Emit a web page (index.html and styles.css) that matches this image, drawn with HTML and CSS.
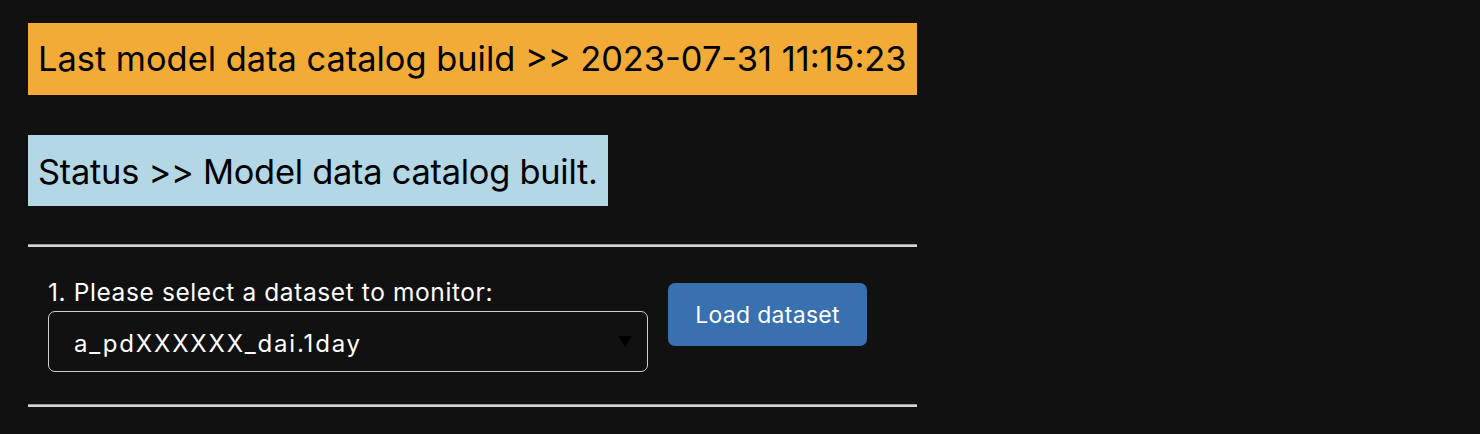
FILE: index.html
```html
<!DOCTYPE html>
<html>
<head>
<meta charset="utf-8">
<link rel="stylesheet" href="styles.css">
</head>
<body>
<main class="page">
  <div class="banner-row"><div class="banner banner-build">Last model data catalog build &gt;&gt; 2023-07-31 11:15:23</div></div>
  <div class="banner-row"><div class="banner banner-status">Status &gt;&gt; Model data catalog built.</div></div>
  <hr class="rule rule-top">
  <section class="picker">
    <div class="field">
      <label class="field-label" for="ds">1. Please select a dataset to monitor:</label>
      <div class="select-box" id="ds">
        <span class="select-value">a_pdXXXXXX_dai.1day</span>
        <span class="select-arrow"></span>
      </div>
    </div>
    <button class="btn-load">Load dataset</button>
  </section>
  <hr class="rule">
</main>
</body>
</html>
```
FILE: styles.css
```css
html, body {
  margin: 0;
  background: #111111;
}
body {
  font-family: Inter, "Noto Sans", sans-serif;
}
.page {
  width: 889px;
  padding: 23px 0 0 28px;
}
.banner-row {
  display: flex;
}
.banner {
  font-size: 34.4px;
  line-height: 72px;
  height: 72px;
  padding: 0 10px;
  color: #000;
  white-space: nowrap;
}
.banner-build {
  background: #f2ab37;
}
.banner-status {
  background: #b4d7e6;
  margin-top: 40px;
  height: 71px;
  line-height: 73px;
  letter-spacing: -0.25px;
}
.rule {
  margin: 0;
  border: 0;
  border-top: 1px solid #9a9a9a;
  height: 2px;
  background: #d4d4d4;
}
.rule-top {
  margin-top: 38px;
}
.picker {
  display: flex;
  align-items: flex-start;
  gap: 20px;
  padding: 30px 20px 32px;
}
.field {
  display: flex;
  flex-direction: column;
  width: 600px;
}
.field-label {
  color: #fff;
  font-size: 24.5px;
  line-height: 30px;
  letter-spacing: 0.6px;
  margin-bottom: 4px;
}
.select-box {
  box-sizing: border-box;
  height: 61px;
  border: 1px solid #d0d0d0;
  border-radius: 7px;
  display: flex;
  align-items: center;
  justify-content: space-between;
  padding: 4px 15px 0 25px;
}
.select-value {
  color: #fff;
  font-size: 24px;
  letter-spacing: 1.8px;
}
.select-arrow {
  width: 0;
  height: 0;
  margin-top: -4px;
  border-left: 7px solid transparent;
  border-right: 7px solid transparent;
  border-top: 11px solid #000;
}
.btn-load {
  margin-top: 6px;
  width: 199px;
  height: 63px;
  border: 0;
  border-radius: 7px;
  background: #3870b0;
  color: #fff;
  font-family: Inter, "Noto Sans", sans-serif;
  font-size: 23px;
  letter-spacing: 0.3px;
  padding: 0;
}
```
